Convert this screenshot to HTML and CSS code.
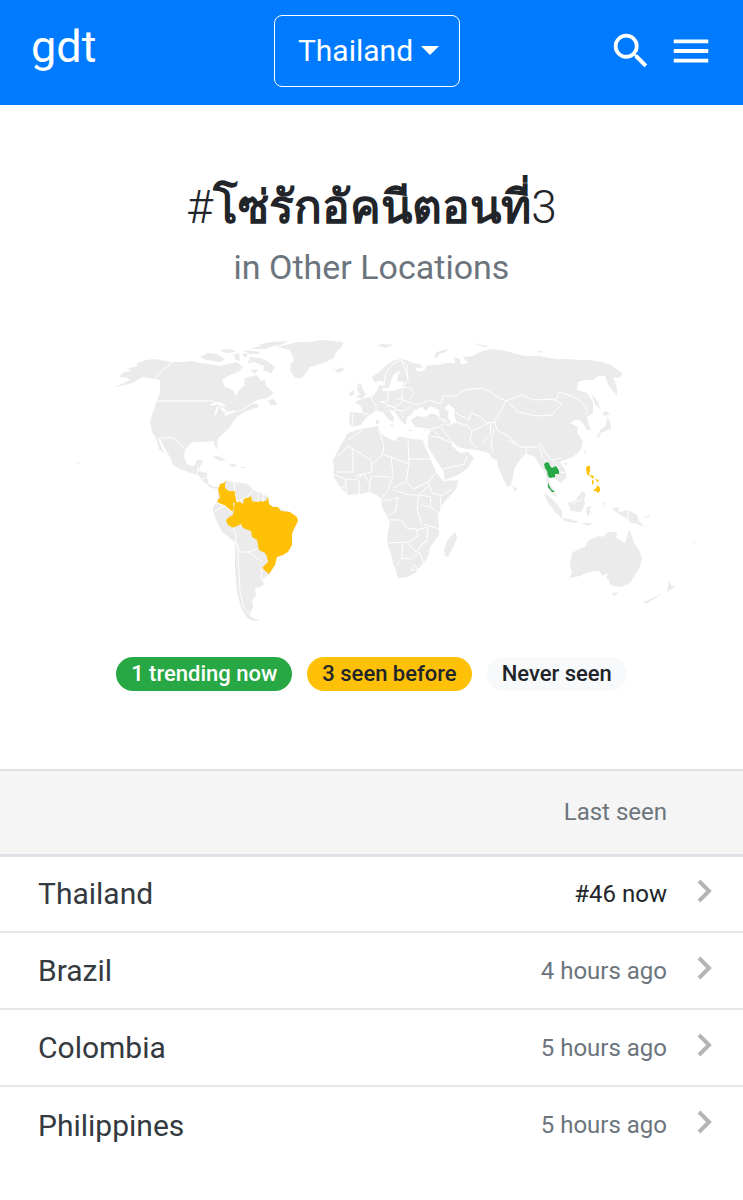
FILE: index.html
```html
<!DOCTYPE html>
<html lang="en">
<head>
  <meta charset="UTF-8" />
  <meta name="viewport" content="width=device-width, initial-scale=1.0"/>
  <title>gdt</title>
  <link rel="stylesheet" href="styles.css">
</head>
<body>
  <header class="navbar">
    <a class="brand" href="#">gdt</a>
    <button class="location" type="button">Thailand <span class="caret"></span></button>
    <div class="actions">
      <button type="button" aria-label="Search">
        <svg width="46" height="46" viewBox="0 0 24 24" fill="#fff"><path d="M15.500 14h-.79l-.28-.27A6.470 6.470 0 0 0 16 9.500 6.500 6.500 0 1 0 9.500 16c1.610 0 3.090-.59 4.230-1.570l.27.28v.79l5 4.990L20.490 19l-4.990-5zm-6 0C7.010 14 5 11.990 5 9.500S7.010 5 9.500 5 14 7.010 14 9.500 11.990 14 9.500 14z"/></svg>
      </button>
      <button type="button" aria-label="Menu">
        <svg width="46" height="46" viewBox="0 0 24 24" fill="#fff"><path d="M3 18h18v-2H3v2zm0-5h18v-2H3v2zm0-7v2h18V6H3z"/></svg>
      </button>
    </div>
  </header>

  <main>
    <section class="intro">
      <h1>#<strong lang="th">โซ่รักอัคนีตอนที่</strong>3</h1>
      <p class="subtitle">in Other Locations</p>

      <svg class="map" viewBox="0 330 743 300" role="img" aria-label="World map">
        <g class="land">
          <!-- North America -->
          <path d="M113 388L130 380 127 378 119 377 124 372 133 371 127 369 137 366 137 363 146 360 155 359 172 362 185 362 192 361 200 363 209 364 220 366 229 364 237 362 243 367 238 372 230 375 222 380 225 387 233 390 236 396 239 390 245 385 244 379 248 377 257 375 261 381 265 380 266 386 274 393 267 398 257 400 250 405 257 403 259 407 250 410 244 412 237 417 233 422 230 427 224 433 218 438 217 450 215 446 213 441 203 442 194 442 190 444 186 449 184 455 185 460 188 465 194 466 197 460 203 460 200 467 198 471 207 473 208 483 213 487 219 487 218 489 211 488 204 482 198 475 188 472 180 469 173 465 171 459 167 452 163 445 160 438 158 438 161 446 164 453 159 449 156 438 152 432 150 422 153 412 157 401 160 392 160 380 154 379 143 377 132 383Z"/>
          <path d="M200 357L208 353 216 354 225 359 221 362 206 360ZM219 350L231 349 236 352 226 353ZM233 355L239 353 240 361 236 360ZM241 354L248 353 246 358ZM243 350L260 352 258 354 249 354ZM250 357L260 358 267 361 275 367 271 373 263 370 264 366 254 362 248 363ZM250 370L258 369 255 374ZM249 349L262 346 258 345 270 342 288 341 281 345 273 346 265 349ZM268 400L274 399 277 405 270 405Z"/>
          <path d="M212 457L218 456 226 460 221 461ZM229 464L235 464 238 466 232 467ZM241 467h4v1h-4z"/>
          <!-- Greenland, Iceland -->
          <path d="M277 347L290 344 297 342 310 342 323 340 343 342 342 347 336 352 334 358 326 362 316 365 310 367 305 374 302 378 295 378 290 370 291 364 294 360 290 350ZM332 368L336 370 342 367 344 370 338 373Z"/>
          <!-- South America -->
          <path d="M221 484L227 481 234 482 248 484 253 490 261 493 268 497 269 505 290 512 270 574 262 579 264 584 261 587 255 588 256 595 252 600 253 607 250 613 253 618 260 621 254 621 247 618 242 610 237 593 235 567 235 542 222 532 216 520 213 512 213 507 217 502 219 490Z"/>
          <!-- Europe and Asia -->
          <path d="M372 377L379 372 387 365 393 361 400 359 406 360 413 363 420 364 423 368 415 368 418 372 425 370 426 366 432 365 438 365 447 363 455 363 454 357 460 359 461 364 468 363 463 357 472 356 480 352 490 349 502 350 513 353 525 356 537 356 557 359 568 359 580 360 590 360 603 362 611 365 623 374 619 378 613 377 617 387 617 395 610 388 607 382 605 376 599 376 593 380 585 380 578 382 577 390 587 393 593 402 593 413 587 417 588 422 591 430 587 430 584 425 580 420 575 420 570 423 578 427 577 432 583 442 581 449 578 453 571 458 563 460 560 462 566 471 566 478 561 483 557 480 553 478 549 478 549 484 553 488 557 497 551 493 547 487 546 475 543 469 540 466 535 457 530 455 525 454 520 460 514 469 513 477 511 485 507 487 503 478 498 467 497 460 493 459 489 453 477 450 467 449 458 447 450 440 453 447 460 453 468 452 474 458 468 468 460 474 445 480 443 470 436 460 428 447 428 436 431 430 424 428 415 427 411 420 417 416 425 417 432 413 440 417 439 410 430 406 426 411 422 407 414 410 411 415 407 417 406 425 402 422 397 415 394 411 389 410 394 417 393 422 388 419 383 412 376 411 371 414 365 419 361 425 352 427 349 424 350 412 363 413 361 406 354 402 362 399 370 397 377 391 379 385 384 386 382 391 392 391 402 388 404 382 397 381 398 375 401 370 394 374 391 381 389 388 384 388 383 381 374 382Z"/>
          <path d="M358 383L362 385 363 390 366 394 363 398 356 398 360 394 357 390ZM350 392L354 390 354 395 349 396ZM377 345L384 344 394 345 385 348ZM434 357L437 352 448 349 446 352 439 354 437 358ZM470 343L489 346 485 347ZM537 351L543 351 541 353ZM390 424L394 425 392 427ZM376 420h3v4h-3zM408 430h5v1h-5zM424 430h3v1h-3z"/>
          <!-- Africa -->
          <path d="M348 433L357 430 367 428 378 426 382 435 392 440 396 441 397 437 402 437 412 439 423 440 425 447 428 453 432 463 436 472 443 481 458 480 457 488 448 498 442 505 438 515 439 526 439 535 430 547 428 557 420 567 415 573 408 577 398 578 396 571 393 563 391 554 387 543 388 531 390 524 388 518 382 507 381 498 375 494 370 492 360 494 348 495 340 487 333 475 334 468 333 460 337 452 341 445Z"/>
          <path d="M455 532L457 538 454 545 448 557 445 556 444 550 447 541Z"/>
          <!-- Japan, Sri Lanka, Taiwan -->
          <path d="M591 393L598 402 600 409 595 404ZM602 413L606 411 610 414 605 416ZM607 417L611 424 611 429 603 432 599 434 600 430 606 426ZM597 434L601 435 598 438ZM513 486L517 489 515 492ZM584 451L586 449 585 455ZM564 463h4l-2 3z"/>
          <!-- Indonesia, New Guinea -->
          <path d="M543 493L549 496 556 503 562 511 562 518 555 512 549 504ZM562 518L570 519 579 522 575 523 564 521ZM568 503L575 501 582 491 586 494 584 499 585 504 581 512 571 511ZM587 507L594 506 589 509 593 515 590 512 588 517 586 511ZM582 523h12l-7 3zM603 501L605 503 604 507ZM612 508L618 507 619 512 628 510 637 515 639 521 645 527 637 524 629 522 626 518 617 513ZM642 518L649 515 649 517Z"/>
          <!-- Australia, Tasmania, New Zealand -->
          <path d="M572 553L579 549 585 547 588 541 595 537 600 536 603 537 608 532 617 532 616 538 625 543 627 537 629 529 632 536 634 543 639 550 642 558 640 567 634 577 629 584 620 587 610 585 609 580 606 578 608 573 602 576 600 571 594 571 584 574 580 576 569 578 572 573 570 564ZM612 593L618 592 614 597ZM669 580L671 585 675 587 667 592 668 587ZM662 593L659 596 646 604 643 602 653 598ZM77 463h2v1h-2zM693 542h2v1h-2z"/>
        </g>
        <g class="seen">
          <path d="M227 480L225 484 225 488 229 491 236 491 236 495 237 502 233 503 234 508 232 512 225 506 217 502 220 497 218 490 220 484 224 483Z"/>
          <path d="M235 502L239 501 243 504 244 498 248 498 251 496 252 501 256 502 262 501 266 501 268 497 269 504 273 507 278 507 281 511 290 512 297 517 298 521 294 529 292 534 292 545 288 552 283 555 277 557 275 565 269 574 262 568 268 562 267 557 265 553 259 550 257 540 252 537 251 531 243 528 241 524 233 528 228 525 226 520 229 517 233 515Z"/>
          <path d="M587 466L590 466 590 471 589 474 590 477 587 474 586 469ZM590 475L594 476 593 479 591 477ZM592 480L594 481 593 485 592 484ZM595 478L599 481 597 482ZM598 485L600 488 600 491 598 493 596 491 593 491 596 488Z"/>
        </g>
        <g class="trending">
          <path d="M544 464L547 462 549 463 550 466 552 468 556 466 559 470 559 474 555 474 555 477 550 478 548 476 547 471 545 468ZM548 482L549 485 551 489 555 492 552 492 548 487Z"/>
        </g>
        <g class="borders">
          <!-- Americas -->
          <path d="M172 362L154 379 160 386M157 401H213L223 408 230 413 243 410 251 404M160 438L173 438 180 444 186 451M198 466L197 474M202 479L208 477M234 482L235 492 237 502 245 498 253 491M258 492V502M263 494V502M217 503L225 506 232 512M213 513L220 508 225 506M233 527L236 535 236 541 240 552 249 552 257 549M236 542L238 553 239 573 240 592 244 608 252 617M249 552L262 562M262 568L261 580"/>
          <path class="lakes" d="M211 405L219 403 225 406M218 407L215 415M221 408L226 413M225 415L234 411"/>
          <!-- Africa -->
          <path d="M337 457L348 446 371 460M348 440L363 430M353 449V472H337M371 460L372 472 355 476M378 428L384 446 382 456 371 465M384 455L409 464 408 439M408 459H432M409 464L406 482 413 489 428 482 436 473M391 456L393 476 388 490 382 498M371 476L391 477M371 476L369 492M333 474L345 479 347 495M345 479L355 480 364 474 369 483M359 480L359 494M341 488L347 484M393 488L405 482M393 490L409 495 419 495 429 485M382 500H391L398 497 395 512 388 516M419 495L417 508 422 526M388 520L402 520 406 528 416 529 418 536 408 542 387 543M428 483L432 493 441 496 452 489M419 495L431 497 430 507 420 505M430 507L438 513M440 496L441 507M424 524L439 529M417 530L428 527 427 541 420 545M403 543L402 558 396 567M408 543L416 552 425 541M402 558L411 559 419 552 424 563M411 568L415 565 417 569 412 571Z"/>
          <!-- Europe -->
          <path d="M384 386L386 372 394 363 402 360 408 378M400 360L407 365 408 380 402 389 402 400 418 405 429 400M388 391L388 401 379 402M375 392L371 399 376 405 376 411M353 414L352 426M363 414L369 414M382 402L394 408 402 402M394 410L404 411 412 406M396 399H402M403 388L410 387 414 394 409 399M397 382L405 383M385 407L393 406 398 411M401 411L403 418"/>
          <!-- Asia -->
          <path d="M429 400L441 404 443 396 455 396 465 390 483 388 498 397 506 401 521 395 533 400 557 399 559 392 574 397 586 406 587 414M506 401L500 413 494 420 497 430 508 436 520 447 536 447 541 443 545 452 551 460 562 458M508 402L518 412 536 416 552 415 562 404 554 400M471 413L481 417 486 423 496 422M471 413L469 420 456 413M441 418L447 425 456 422 468 426 472 432 470 440 477 449M444 424L439 427 430 429M433 429L440 438 450 442M441 428L450 439M430 436L442 438M472 431L491 422 490 435 482 444M494 429L491 442 493 453M508 440L523 448M526 447L527 454M540 446L542 457 548 462M552 460L557 466 561 473 566 472M443 469L464 464 467 456M439 418L447 421M628 509V522M571 504L582 499"/>
          <path class="caspian" d="M447 406L452 411 451 416 454 423"/>
        </g>
      </svg>

      <div class="legend">
        <span class="badge badge-success">1 trending now</span>
        <span class="badge badge-warning">3 seen before</span>
        <span class="badge badge-light">Never seen</span>
      </div>
    </section>

    <table class="locations">
      <thead>
        <tr><th></th><th class="time">Last seen</th><th class="go"></th></tr>
      </thead>
      <tbody>
        <tr>
          <td><a href="#">Thailand</a></td>
          <td class="time now">#46 now</td>
          <td class="go"><svg width="16" height="24" viewBox="0 0 16 24"><path d="M2 2L12 12 2 22"/></svg></td>
        </tr>
        <tr>
          <td><a href="#">Brazil</a></td>
          <td class="time">4 hours ago</td>
          <td class="go"><svg width="16" height="24" viewBox="0 0 16 24"><path d="M2 2L12 12 2 22"/></svg></td>
        </tr>
        <tr>
          <td><a href="#">Colombia</a></td>
          <td class="time">5 hours ago</td>
          <td class="go"><svg width="16" height="24" viewBox="0 0 16 24"><path d="M2 2L12 12 2 22"/></svg></td>
        </tr>
        <tr>
          <td><a href="#">Philippines</a></td>
          <td class="time">5 hours ago</td>
          <td class="go"><svg width="16" height="24" viewBox="0 0 16 24"><path d="M2 2L12 12 2 22"/></svg></td>
        </tr>
      </tbody>
    </table>
  </main>
</body>
</html>
```
FILE: styles.css
```css
:root {
  --primary: #007bff;
  --success: #28a745;
  --warning: #ffc107;
  --light: #f8f9fa;
  --text: #212529;
  --link: #343a40;
  --muted: #6c757d;
  --border: #dee2e6;
  --row-border: #e4e7ea;
}

* {
  box-sizing: border-box;
}

body {
  margin: 0;
  font-family: Roboto, "Noto Sans", sans-serif;
  color: var(--text);
  background: #fff;
}

a {
  color: inherit;
  text-decoration: none;
}

button {
  font-family: inherit;
  color: #fff;
  background: none;
  border: none;
  padding: 0;
  cursor: pointer;
}

/* Navbar */
.navbar {
  display: grid;
  grid-template-columns: 1fr auto 1fr;
  align-items: center;
  height: 105px;
  padding: 0 29px 4px 20px;
  background: var(--primary);
}

.brand {
  color: #fff;
  font-size: 45px;
  line-height: 56px;
  padding: 0 0 8px 11px;
}

.location {
  display: flex;
  align-items: center;
  gap: 8px;
  height: 72px;
  padding: 0 20px 0 23px;
  font-size: 30px;
  border: 1px solid #fff;
  border-radius: 8px;
}

.caret {
  border-top: 9px solid #fff;
  border-left: 9px solid transparent;
  border-right: 9px solid transparent;
}

.actions {
  display: flex;
  justify-content: flex-end;
  gap: 14px;
}

.actions svg {
  display: block;
}

/* Heading and map */
.intro {
  padding: 72px 0 78px;
  text-align: center;
}

h1 {
  margin: 0;
  font-size: 46px;
  font-weight: 300;
  line-height: 60px;
}

h1 strong {
  font-weight: 700;
}

.subtitle {
  margin: 8px 0 40px;
  font-size: 34px;
  line-height: 45px;
  color: var(--muted);
}

.map {
  display: block;
  width: 100%;
}

.land {
  fill: #ebebeb;
}

.seen {
  fill: var(--warning);
}

.trending {
  fill: var(--success);
}

.borders {
  fill: none;
  stroke: #fff;
  stroke-width: 1;
  stroke-linejoin: round;
}

.lakes {
  stroke-width: 2;
}

.caspian {
  stroke-width: 6;
}

.legend {
  display: flex;
  justify-content: center;
  gap: 15px;
  margin-top: 27px;
}

.badge {
  padding: 0 15px;
  font-size: 22px;
  font-weight: 500;
  line-height: 34px;
  border-radius: 17px;
}

.badge-success {
  color: #fff;
  background: var(--success);
}

.badge-warning {
  background: var(--warning);
}

.badge-light {
  background: var(--light);
}

/* Locations table */
.locations {
  width: 100%;
  border-collapse: collapse;
}

.locations th {
  height: 85px;
  padding: 0 0 2px;
  font-weight: 400;
  background: #f5f5f5;
  border-top: 2px solid var(--border);
  border-bottom: 3px solid var(--border);
}

.locations td {
  height: 77px;
  padding: 0 0 0 38px;
  font-size: 30px;
  color: var(--link);
  border-top: 2px solid var(--row-border);
}

.locations .time {
  padding: 0;
  font-size: 24px;
  color: var(--muted);
  text-align: right;
}

.locations .now {
  color: var(--text);
}

.locations .go {
  width: 76px;
  padding: 0 0 6px 30px;
  text-align: left;
}

.go svg {
  display: block;
  fill: none;
  stroke: #b5b5b5;
  stroke-width: 4;
}
```
